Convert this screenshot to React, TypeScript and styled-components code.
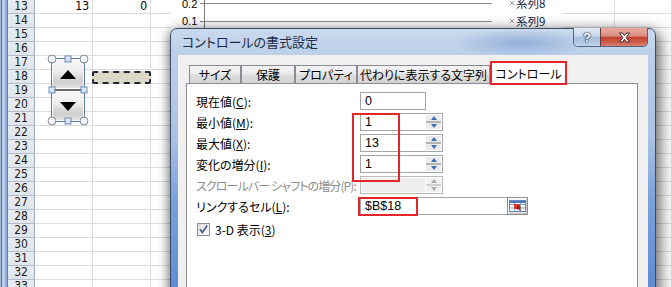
import styled, { createGlobalStyle } from "styled-components";

const GlobalStyle = createGlobalStyle`
  html, body { margin: 0; padding: 0; }
  body {
    width: 672px;
    height: 287px;
    overflow: hidden;
    background: #fff;
    font-family: "Noto Sans CJK JP", sans-serif;
    font-feature-settings: "palt";
  }
`;

const Screen = styled.div`
  position: relative;
  width: 672px;
  height: 287px;
  overflow: hidden;
  background: #fff;
`;

/* ---------- spreadsheet behind ---------- */

const Sheet = styled.div`
  display: flex;
  height: 100%;
`;

const WindowEdge = styled.div`
  width: 8px;
  flex-shrink: 0;
  background: linear-gradient(
    90deg,
    #a8bbd6 0 1px,
    #4f74ad 1px 2px,
    #b7cdec 2px 5px,
    #8eaad6 5px 7px,
    #5d7fb5 7px 8px
  );
`;

const Rows = styled.div`
  flex: 1;
  display: flex;
  flex-direction: column;
`;

const SheetRow = styled.div`
  display: flex;
  height: 14px;
  flex-shrink: 0;
`;

const RowHead = styled.div`
  width: 27px;
  flex-shrink: 0;
  box-sizing: border-box;
  border-right: 1px solid #9eaabb;
  border-bottom: 1px solid #b3bcc8;
  background: linear-gradient(#e9edf3, #dfe5ec);
  font: 12px "Liberation Sans Narrow", "DejaVu Sans Condensed", sans-serif;
  line-height: 13px;
  text-align: center;
  color: #1b1b1b;
`;

const Cell = styled.div<{ $w?: number }>`
  ${({ $w }) => ($w ? `width: ${$w}px; flex-shrink: 0;` : "flex: 1;")}
  box-sizing: border-box;
  border-right: 1px solid #dadcdd;
  border-bottom: 1px solid #dadcdd;
  padding-right: 3px;
  text-align: right;
  font: 12px "Liberation Sans Narrow", "DejaVu Sans Condensed", sans-serif;
  line-height: 13px;
  color: #000;
`;

/* ---------- objects on the sheet ---------- */

const ChartBox = styled.svg`
  position: absolute;
  left: 171px;
  top: 0;
  background: #fff;
`;

const SpinObject = styled.div`
  position: absolute;
  left: 51px;
  top: 58px;
  width: 34px;
  height: 64px;
  box-sizing: border-box;
  border: 1px solid #5d7aa2;
  display: flex;
  flex-direction: column;
`;

const SpinFace = styled.div`
  flex: 1;
  display: flex;
  align-items: center;
  justify-content: center;
  margin: 1px;
  background: linear-gradient(#f8f8f8, #eeeeee 40%, #d9d9d9 62%, #cfcfcf 80%, #e2e2e2);
`;

const SpinDivider = styled.div`
  height: 2px;
  background: #6b6b6b;
`;

const Handle = styled.span<{ $x: number; $y: number; $round?: boolean }>`
  position: absolute;
  left: ${({ $x }) => $x}%;
  top: ${({ $y }) => $y}%;
  width: ${({ $round }) => ($round ? 7 : 5)}px;
  height: ${({ $round }) => ($round ? 7 : 5)}px;
  transform: translate(-50%, -50%);
  border: 1px solid ${({ $round }) => ($round ? "#8a8f96" : "#6d89b5")};
  border-radius: ${({ $round }) => ($round ? "50%" : "0")};
  background: ${({ $round }) =>
    $round
      ? "radial-gradient(circle at 40% 35%, #ffffff, #dde5ef)"
      : "linear-gradient(#eef5fd, #c3d8f1)"};
`;

const LinkedCell = styled.div`
  position: absolute;
  left: 92px;
  top: 71px;
  width: 59px;
  height: 13px;
  box-sizing: border-box;
  border: 2px dashed #1f2736;
  border-radius: 2px;
  background: #ddd8c6;
`;

/* ---------- dialog ---------- */

const Dialog = styled.div`
  position: absolute;
  left: 170px;
  top: 28px;
  width: 486px;
  height: 272px;
  box-sizing: border-box;
  padding: 0 7px;
  border: 1px solid #3b4d66;
  border-radius: 7px 7px 0 0;
  display: flex;
  flex-direction: column;
  background:
    radial-gradient(ellipse 70px 14px at 350px 14px, rgba(110, 145, 200, 0.55), transparent),
    linear-gradient(180deg, #c9d9ee 0, #bbcfe9 26px, #a9c1e3 110px, #7aa1da 170px, #5c89d2 100%);
  box-shadow: 4px 4px 16px rgba(0, 0, 0, 0.6), -3px 2px 9px rgba(0, 0, 0, 0.25);
`;

const TitleBar = styled.div`
  height: 26px;
  flex-shrink: 0;
  display: flex;
  align-items: flex-start;
  justify-content: space-between;
`;

const Title = styled.div`
  margin-left: 4px;
  line-height: 26px;
  font-size: 13px;
  color: #1c2a44;
`;

const CaptionButtons = styled.div`
  display: flex;
  height: 18px;
  margin-top: -1px;
  border: 1px solid #4e6584;
  border-top: none;
  border-radius: 0 0 5px 5px;
  overflow: hidden;
`;

const CaptionButton = styled.div<{ $close?: boolean }>`
  width: ${({ $close }) => ($close ? 46 : 26)}px;
  display: flex;
  align-items: center;
  justify-content: center;
  font: bold 13px "Liberation Sans", sans-serif;
  color: #fff;
  text-shadow: 0 0 1px #1d2b44, 0 0 1px #1d2b44, 0 0 2px #1d2b44;
  border-left: ${({ $close }) => ($close ? "1px solid #6a3a3a" : "none")};
  background: ${({ $close }) =>
    $close
      ? "linear-gradient(#e9ab9e, #d98d80 45%, #c3402e 52%, #cf5f4c 80%, #d9816f)"
      : "linear-gradient(#e1ebf7, #c9d8ec 45%, #a8bedd 52%, #b3c8e4 85%, #c6d6ec)"};
`;

const Client = styled.div`
  flex: 1;
  display: flex;
  flex-direction: column;
  padding: 10px 10px 0 8px;
  background: #f0f0f0;
`;

const TabStrip = styled.div`
  display: flex;
  align-items: flex-end;
  height: 18px;
  padding-left: 3px;
  flex-shrink: 0;
`;

const Tab = styled.div<{ $w: number; $active?: boolean }>`
  position: relative;
  width: ${({ $w }) => $w}px;
  height: ${({ $active }) => ($active ? 24 : 18)}px;
  margin-bottom: ${({ $active }) => ($active ? -2 : 0)}px;
  z-index: ${({ $active }) => ($active ? 1 : 0)};
  flex-shrink: 0;
  box-sizing: border-box;
  display: flex;
  align-items: center;
  justify-content: center;
  font-size: 12px;
  white-space: nowrap;
  color: #000;
  border: ${({ $active }) => ($active ? "2px solid #e3262b" : "1px solid #898c95")};
  border-bottom: ${({ $active }) => ($active ? "2px solid #e3262b" : "none")};
  background: ${({ $active }) =>
    $active ? "#fff" : "linear-gradient(#f3f3f3, #ebebeb 48%, #dedede 52%, #d3d3d3)"};
`;

const Panel = styled.div`
  position: relative;
  flex: 1;
  background: #fff;
  border: 1px solid #898c95;
  padding: 8px 0 0 9px;
`;

const Form = styled.div`
  display: grid;
  grid-template-columns: 164px auto;
  grid-auto-rows: 18px;
  row-gap: 3px;
  align-items: center;
`;

const Label = styled.div<{ $disabled?: boolean; $tight?: boolean }>`
  font-size: 12px;
  color: ${({ $disabled }) => ($disabled ? "#8d8d8d" : "#000")};
  letter-spacing: ${({ $tight }) => ($tight ? "-0.9px" : "0")};
  white-space: nowrap;
  u {
    text-underline-offset: 1px;
  }
`;

const ValueBox = styled.div<{ $w: number; $disabled?: boolean }>`
  width: ${({ $w }) => $w}px;
  height: 18px;
  box-sizing: border-box;
  display: flex;
  border: 1px solid ${({ $disabled }) => ($disabled ? "#b9b9b9" : "#a5a5a5")};
  background: #fff;
`;

const ValueText = styled.div<{ $disabled?: boolean }>`
  flex: 1;
  padding-left: 4px;
  margin: ${({ $disabled }) => ($disabled ? "1px" : "0")};
  font: 12.5px "Liberation Sans", sans-serif;
  line-height: 16px;
  color: #000;
  background: ${({ $disabled }) => ($disabled ? "#eeeeee" : "transparent")};
`;

const Spinner = styled.div<{ $disabled?: boolean }>`
  width: 15px;
  margin: 1px 1px 1px 0;
  display: flex;
  flex-direction: column;
  background: ${({ $disabled }) => ($disabled ? "#f1f1f1" : "#ececec")};
`;

const SpinHalf = styled.div`
  flex: 1;
  display: flex;
  align-items: center;
  justify-content: center;
`;

const SpinBand = styled.div<{ $disabled?: boolean }>`
  height: 2px;
  background: ${({ $disabled }) => ($disabled ? "#d0d0d0" : "#b4b4b4")};
`;

const LinkField = styled.div`
  display: flex;
  height: 18px;
`;

const RefButton = styled.div`
  width: 21px;
  height: 18px;
  margin-left: -1px;
  box-sizing: border-box;
  display: flex;
  align-items: center;
  justify-content: center;
  border: 1px solid #8f8f8f;
  box-shadow: inset 1px 1px 0 #fff, inset -1px -1px 0 #c8c8c8;
  background: linear-gradient(#f6f6f6, #e4e4e4);
`;

const CheckRow = styled.div`
  display: flex;
  align-items: center;
  gap: 5px;
  height: 15px;
  margin: 7px 0 0 1px;
  font-size: 12px;
  color: #000;
`;

const Annotation = styled.div<{ $l: number; $t: number; $w: number; $h: number }>`
  position: absolute;
  left: ${({ $l }) => $l}px;
  top: ${({ $t }) => $t}px;
  width: ${({ $w }) => $w}px;
  height: ${({ $h }) => $h}px;
  box-sizing: border-box;
  border: 2px solid #e3262b;
  pointer-events: none;
`;

/* ---------- small drawings ---------- */

function Tri({ dir, color, size = 7 }: { dir: "up" | "down"; color: string; size?: number }) {
  const h = Math.round(size / 2) + 1;
  return (
    <svg width={size} height={h} viewBox={`0 0 ${size} ${h}`}>
      {dir === "up" ? (
        <path d={`M0 ${h}L${size / 2} 0L${size} ${h}Z`} fill={color} />
      ) : (
        <path d={`M0 0L${size / 2} ${h}L${size} 0Z`} fill={color} />
      )}
    </svg>
  );
}

function SpinButtons({ disabled }: { disabled?: boolean }) {
  const c = disabled ? "#a8a8a8" : "#3f6db5";
  return (
    <Spinner $disabled={disabled}>
      <SpinHalf>
        <Tri dir="up" color={c} size={6} />
      </SpinHalf>
      <SpinBand $disabled={disabled} />
      <SpinHalf>
        <Tri dir="down" color={c} size={6} />
      </SpinHalf>
    </Spinner>
  );
}

function CloseGlyph() {
  return (
    <svg width="13" height="11" viewBox="0 0 13 11">
      <path
        d="M1.5 1h3l2 2.6L8.5 1h3L8.2 5.5l3.3 4.5h-3l-2-2.7-2 2.7h-3l3.3-4.5z"
        fill="#fff"
        stroke="#3a2a2a"
        strokeWidth="1"
        strokeLinejoin="round"
      />
    </svg>
  );
}

function RefIcon() {
  return (
    <svg width="17" height="12" viewBox="0 0 17 12">
      <rect x="0.5" y="0.5" width="16" height="11" fill="#fff" stroke="#6288c0" />
      <path d="M1 4.5h15M1 8h15M5.5 3v8.5M11.5 3v8.5" stroke="#86a6d4" />
      <rect x="1" y="1" width="15" height="2" fill="#4f79b8" />
      <rect x="5" y="4" width="6" height="5" fill="#d8382a" />
      <path d="M8 5.2l4.6 2.8-1.9.5 1.3 2.3-.9.5-1.3-2.3-1.4 1.3z" fill="#9c1c10" />
    </svg>
  );
}

function CheckMark() {
  return (
    <svg width="13" height="13" viewBox="0 0 13 13">
      <defs>
        <linearGradient id="cbfill" x1="0" y1="0" x2="1" y2="1">
          <stop offset="0" stopColor="#dcdcdc" />
          <stop offset="1" stopColor="#ffffff" />
        </linearGradient>
      </defs>
      <rect x="0.5" y="0.5" width="12" height="12" fill="url(#cbfill)" stroke="#8e8f8f" />
      <path d="M3 6.3l2.3 3.2L10.2 2.6" stroke="#4b5f95" strokeWidth="1.8" fill="none" />
    </svg>
  );
}

function Chart() {
  return (
    <ChartBox width="391" height="30" viewBox="0 0 391 30">
      <g fontFamily="Liberation Sans, sans-serif" fontSize="11" fill="#000">
        <text x="11" y="7.5">0.2</text>
        <text x="11" y="24.5">0.1</text>
      </g>
      <path d="M33.5 0v30M29 3.5h4M29 21.5h4" stroke="#7a7a7a" />
      <path d="M33.5 3.5H321M33.5 21.5H321" stroke="#8c8c8c" />
      <path d="M339 1l4 4M343 1l-4 4M339 19l4 4M343 19l-4 4" stroke="#9a9a9a" />
      <g fontFamily="Noto Sans CJK JP, sans-serif" fontSize="11.5" fill="#1a2440">
        <text x="345" y="8">系列8</text>
        <text x="345" y="25.5">系列9</text>
      </g>
    </ChartBox>
  );
}

const rowNumbers = Array.from({ length: 21 }, (_, i) => 13 + i);

const tabs = [
  { label: "サイズ", w: 52 },
  { label: "保護", w: 54 },
  { label: "プロパティ", w: 62 },
  { label: "代わりに表示する文字列", w: 133 },
  { label: "コントロール", w: 77, active: true },
];

export default function App() {
  return (
    <Screen>
      <GlobalStyle />
      <Sheet>
        <WindowEdge />
        <Rows>
          {rowNumbers.map((n) => (
            <SheetRow key={n}>
              <RowHead>{n}</RowHead>
              <Cell $w={58}>{n === 13 ? "13" : ""}</Cell>
              <Cell $w={58}>{n === 13 ? "0" : ""}</Cell>
              <Cell $w={411} />
              <Cell $w={53} />
              <Cell />
            </SheetRow>
          ))}
        </Rows>
      </Sheet>

      <Chart />

      <SpinObject>
        <SpinFace>
          <Tri dir="up" color="#000" size={16} />
        </SpinFace>
        <SpinDivider />
        <SpinFace>
          <Tri dir="down" color="#000" size={16} />
        </SpinFace>
        <Handle $x={0} $y={0} $round />
        <Handle $x={100} $y={0} $round />
        <Handle $x={0} $y={100} $round />
        <Handle $x={100} $y={100} $round />
        <Handle $x={50} $y={0} />
        <Handle $x={50} $y={100} />
        <Handle $x={0} $y={50} />
        <Handle $x={100} $y={50} />
      </SpinObject>
      <LinkedCell />

      <Dialog>
        <TitleBar>
          <Title>コントロールの書式設定</Title>
          <CaptionButtons>
            <CaptionButton>?</CaptionButton>
            <CaptionButton $close>
              <CloseGlyph />
            </CaptionButton>
          </CaptionButtons>
        </TitleBar>
        <Client>
          <TabStrip>
            {tabs.map((t) => (
              <Tab key={t.label} $w={t.w} $active={t.active}>
                {t.label}
              </Tab>
            ))}
          </TabStrip>
          <Panel>
            <Form>
              <Label>
                現在値(<u>C</u>):
              </Label>
              <ValueBox $w={66}>
                <ValueText>0</ValueText>
              </ValueBox>

              <Label>
                最小値(<u>M</u>):
              </Label>
              <ValueBox $w={83}>
                <ValueText>1</ValueText>
                <SpinButtons />
              </ValueBox>

              <Label>
                最大値(<u>X</u>):
              </Label>
              <ValueBox $w={83}>
                <ValueText>13</ValueText>
                <SpinButtons />
              </ValueBox>

              <Label>
                変化の増分(<u>I</u>):
              </Label>
              <ValueBox $w={83}>
                <ValueText>1</ValueText>
                <SpinButtons />
              </ValueBox>

              <Label $disabled $tight>
                スクロールバー シャフトの増分(P):
              </Label>
              <ValueBox $w={83} $disabled>
                <ValueText $disabled />
                <SpinButtons disabled />
              </ValueBox>

              <Label>
                リンクするセル(<u>L</u>):
              </Label>
              <LinkField>
                <ValueBox $w={148}>
                  <ValueText>$B$18</ValueText>
                </ValueBox>
                <RefButton>
                  <RefIcon />
                </RefButton>
              </LinkField>
            </Form>
            <CheckRow>
              <CheckMark />
              <span>
                3-D 表示(<u>3</u>)
              </span>
            </CheckRow>

            <Annotation $l={165} $t={29} $w={48} $h={69} />
            <Annotation $l={171} $t={113} $w={60} $h={19} />
          </Panel>
        </Client>
      </Dialog>
    </Screen>
  );
}
